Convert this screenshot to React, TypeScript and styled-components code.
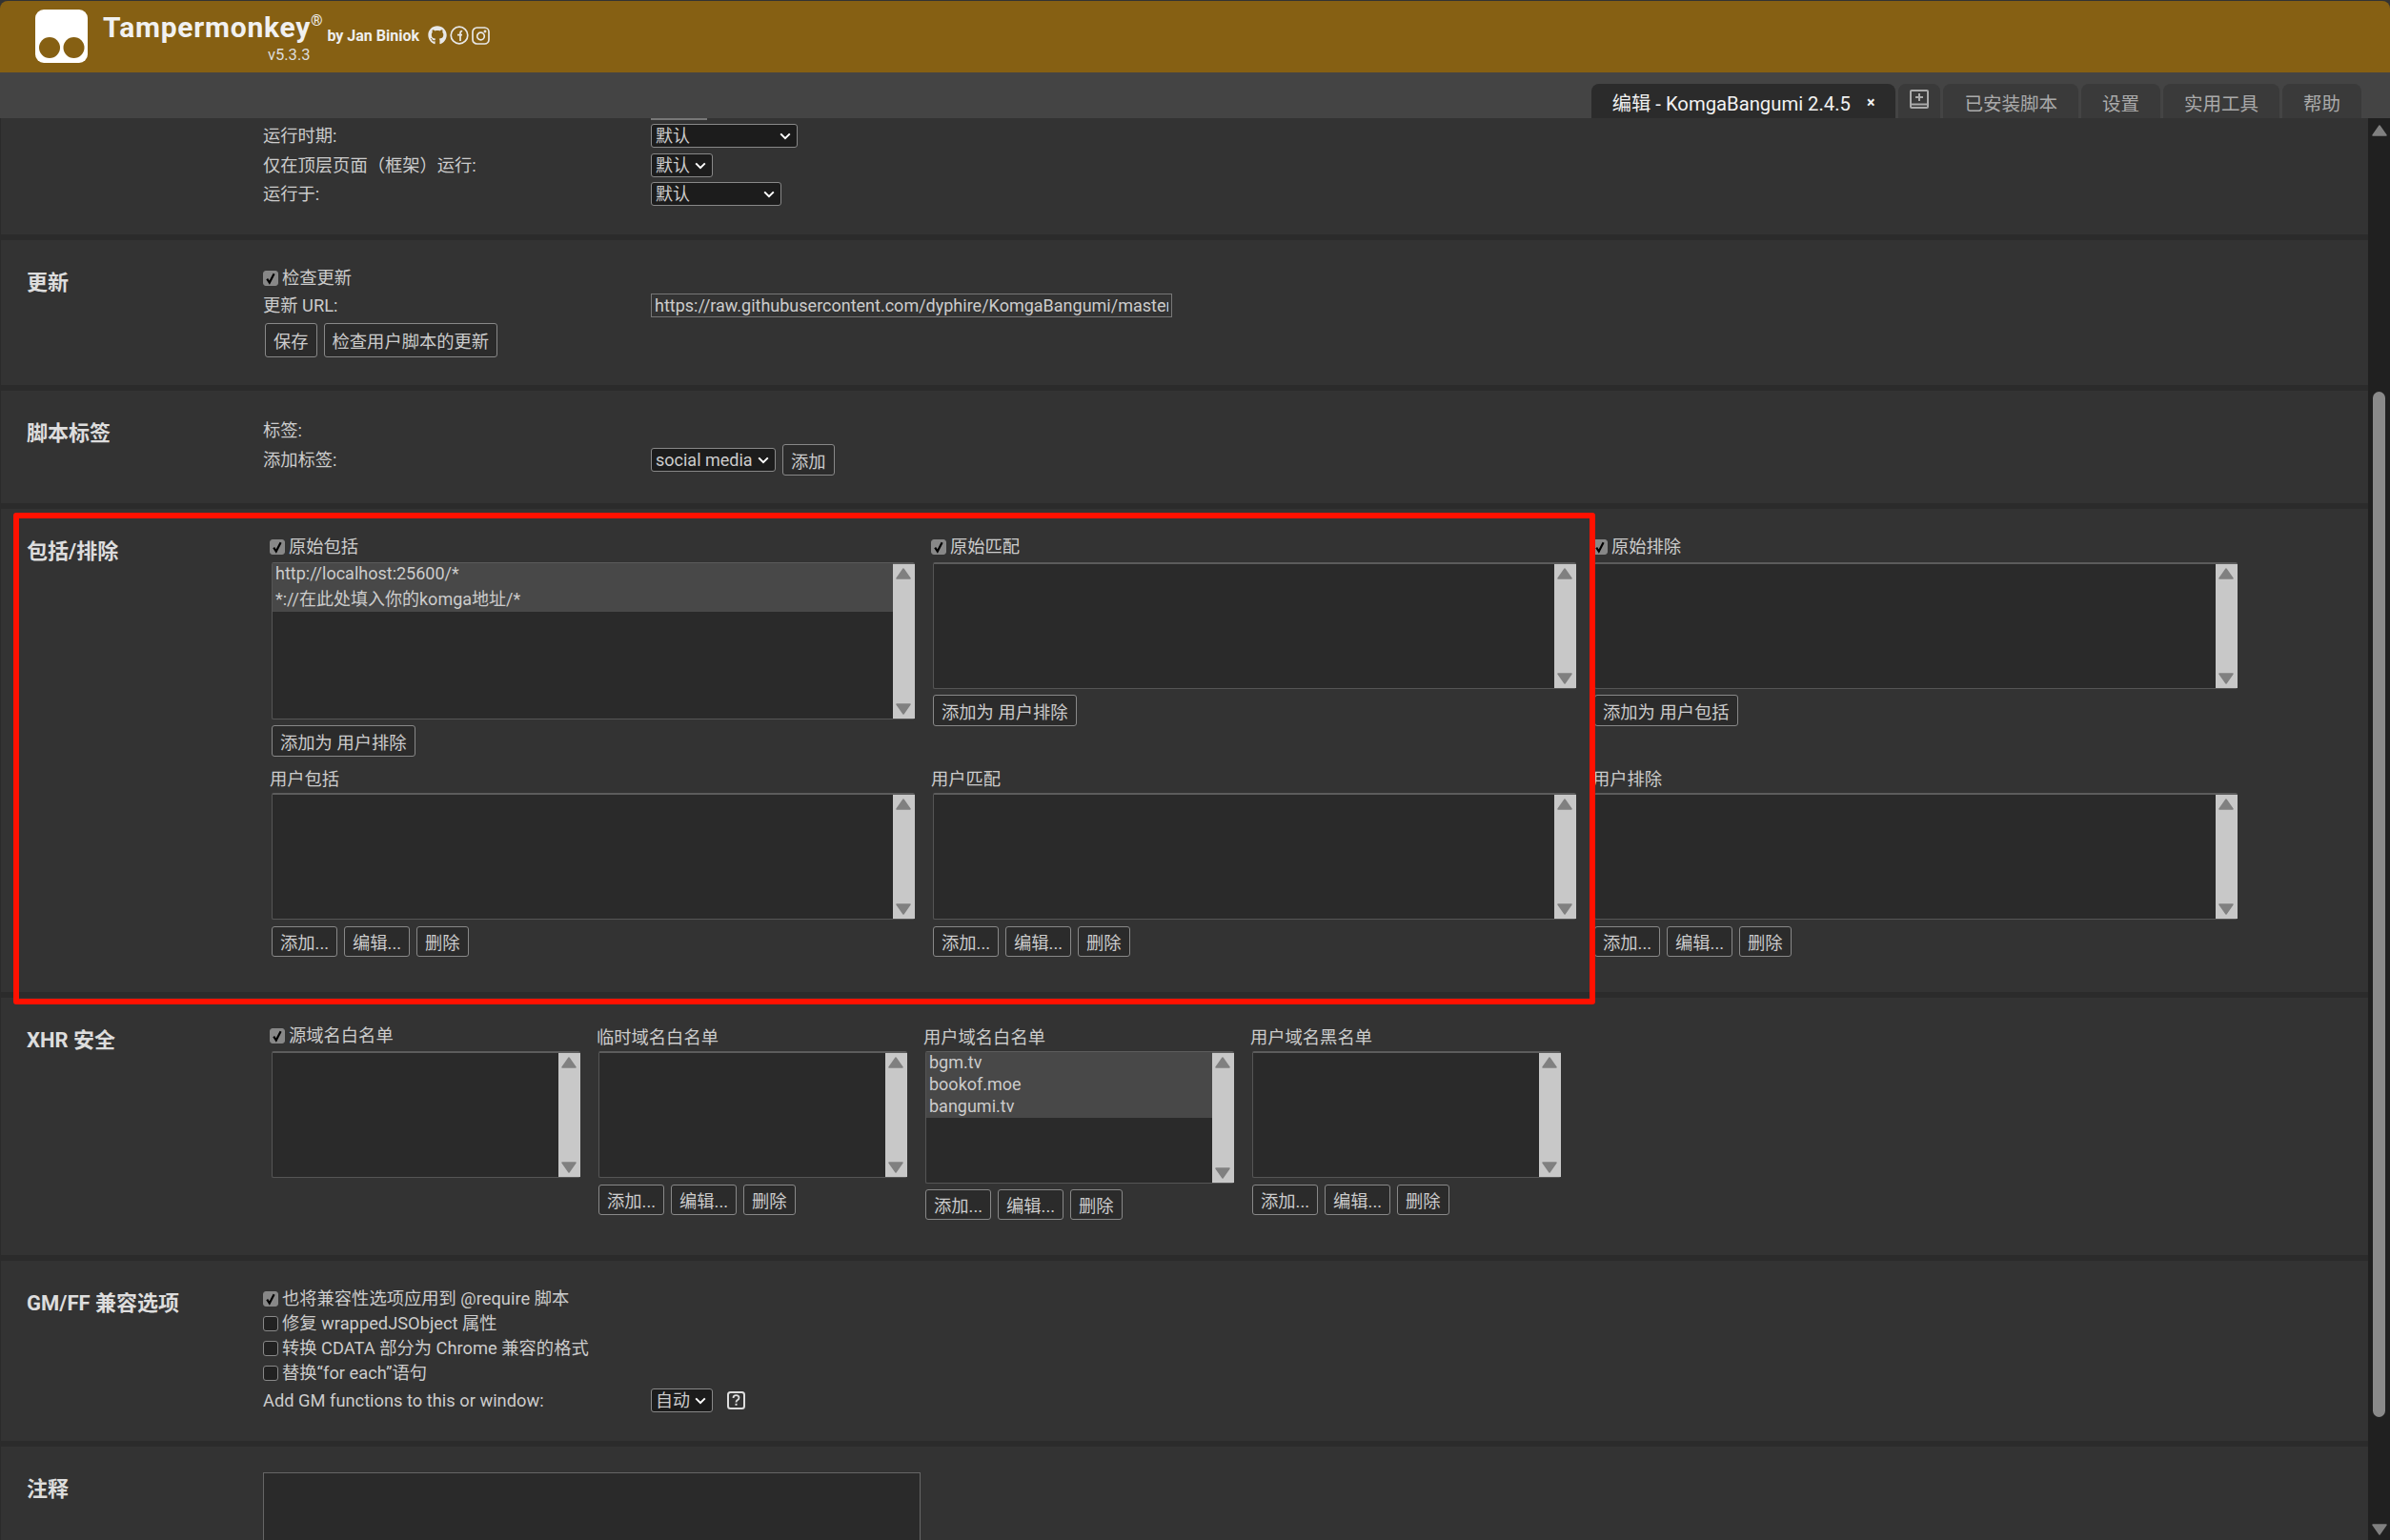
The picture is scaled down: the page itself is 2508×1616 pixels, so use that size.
import { FC, ReactNode } from 'react'
import styled, { createGlobalStyle } from 'styled-components'
import { FaGithub } from 'react-icons/fa'

const chevron = `url("data:image/svg+xml,%3Csvg xmlns='http://www.w3.org/2000/svg' width='12' height='8' viewBox='0 0 12 8'%3E%3Cpath d='M1.2 1.4 L6 6.2 L10.8 1.4' fill='none' stroke='white' stroke-width='2'/%3E%3C/svg%3E")`
const tick = `url("data:image/svg+xml,%3Csvg xmlns='http://www.w3.org/2000/svg' width='16' height='16' viewBox='0 0 16 16'%3E%3Cpath d='M4.2 8.6 L6.8 12.6 L11.6 3.2' fill='none' stroke='black' stroke-width='2.2'/%3E%3C/svg%3E")`

const GlobalStyle = createGlobalStyle`
    html, body {
        margin: 0;
        height: 100%;
        overflow: hidden;
        background: #333;
        color-scheme: dark;
    }
    * {
        box-sizing: border-box;
    }
`

const Page = styled.div`
    position: relative;
    display: flex;
    flex-direction: column;
    height: 1616px;
    overflow: hidden;
    background: #333;
    color: #ccc;
    font-family: Roboto, "Noto Sans CJK SC", sans-serif;
    font-size: 18.3px;
`

const Header = styled.header`
    display: flex;
    align-items: flex-start;
    gap: 16px;
    height: 75px;
    margin-top: 1px;
    padding: 9px 0 0 37px;
    background: #866013;
    border-radius: 8px 8px 0 0;
`

const Brand = styled.div`
    display: flex;
    flex-direction: column;
`

const BrandLine = styled.div`
    display: flex;
    align-items: flex-start;
    height: 40px;
`

const BrandName = styled.span`
    color: #f1f1f1;
    font-size: 30px;
    font-weight: 700;
    line-height: 38px;
    letter-spacing: 0.75px;
    sup {
        font-size: 16px;
        font-weight: 400;
        line-height: 0;
        vertical-align: 12px;
    }
`

const ByLine = styled.span`
    align-self: flex-end;
    margin: 0 0 2px 4px;
    color: #eee;
    font-size: 16px;
    font-weight: 700;
    line-height: 20px;
`

const Socials = styled.span`
    display: inline-flex;
    align-self: flex-end;
    align-items: center;
    gap: 3px;
    margin: 0 0 3px 9px;
    color: #e8e8e8;
`

const Version = styled.div`
    margin: -1px 0 0 173px;
    color: #ddd;
    font-size: 16.5px;
    line-height: 18px;
`

const TabBar = styled.nav`
    display: flex;
    align-items: flex-end;
    justify-content: flex-end;
    gap: 3px;
    height: 48px;
    padding-right: 30px;
    background: #444;
`

const Tab = styled.div<{ $active?: boolean }>`
    display: flex;
    align-items: center;
    height: 36px;
    padding: 2px 22px 0;
    border-radius: 8px 8px 0 0;
    background: ${p => (p.$active ? '#2b2b2b' : '#3a3a3a')};
    color: ${p => (p.$active ? '#f2f2f2' : '#aaa')};
    font-size: ${p => (p.$active ? 20.25 : 19.5)}px;
`

const IconTab = styled(Tab)`
    padding: 6px 12px 0;
    align-items: flex-start;
`

const CloseMark = styled.span`
    margin-left: 17px;
    font-size: 16px;
    font-weight: 700;
`

const Body = styled.div`
    display: flex;
    flex: 1;
    min-height: 0;
`

const Sections = styled.main`
    display: flex;
    flex: 1;
    flex-direction: column;
    gap: 6px;
    overflow: hidden;
    background: #2b2b2b;
`

const Section = styled.section<{ $h: number }>`
    display: flex;
    flex: none;
    height: ${p => p.$h}px;
    background: #333;
    border-left: 1px solid #2b2b2b;
`

const SectionTitle = styled.h2`
    flex: none;
    width: 275px;
    margin: 0;
    padding: 30px 0 0 27px;
    color: #ddd;
    font-size: 22px;
    font-weight: 700;
    line-height: 30px;
`

const Content = styled.div<{ $top: number }>`
    display: flex;
    flex-direction: column;
    align-items: flex-start;
    padding-top: ${p => p.$top}px;
`

const ScrolledEdge = styled.div`
    width: 59px;
    height: 2px;
    margin: 0 0 4px 407px;
    background: #777;
`

const FormRow = styled.div<{ $gap?: number }>`
    display: flex;
    align-items: center;
    min-height: 25px;
    margin-bottom: ${p => p.$gap ?? 5}px;
`

const FieldLabel = styled.label<{ $gap?: number }>`
    flex: none;
    width: 407px;
    margin-bottom: ${p => p.$gap ?? 0}px;
    line-height: 20px;
`

const Dropdown = styled.select<{ $w: number }>`
    appearance: none;
    width: ${p => p.$w}px;
    height: 25px;
    padding: 0 0 0 4px;
    background: #1c1c1c ${chevron} no-repeat right 6px center;
    border: 1.5px solid #888;
    border-radius: 3px;
    color: #ccc;
    font-family: inherit;
    font-size: 18px;
`

const UrlInput = styled.input`
    width: 547px;
    height: 25px;
    padding: 0 3px;
    background: #333;
    border: 1px solid #777;
    color: #ccc;
    font-family: inherit;
    font-size: 18px;
`

const CheckRow = styled.label<{ $gap?: number }>`
    display: flex;
    align-items: center;
    gap: 4px;
    height: 16px;
    line-height: 16px;
    white-space: nowrap;
    margin-bottom: ${p => p.$gap ?? 0}px;
`

const Check = styled.input.attrs({ type: 'checkbox', readOnly: true })`
    appearance: none;
    flex: none;
    width: 16px;
    height: 16px;
    margin: 0;
    background: #222;
    border: 1.5px solid #888;
    border-radius: 3px;
    &:checked {
        background: #888 ${tick} no-repeat center;
    }
`

const ButtonRow = styled.div<{ $top?: number; $left?: number }>`
    display: flex;
    gap: 7px;
    margin: ${p => p.$top ?? 6}px 0 0 ${p => p.$left ?? 0}px;
`

const Action = styled.button<{ $h?: number }>`
    height: ${p => p.$h ?? 32}px;
    padding: 0 8px;
    background: #2b2b2b;
    border: 1.5px solid #888;
    border-radius: 3px;
    color: #ccc;
    font-family: inherit;
    font-size: inherit;
    white-space: nowrap;
`

const ColumnGrid = styled.div<{ $cols: number; $pitch: number; $rows?: string }>`
    display: grid;
    grid-template-columns: repeat(${p => p.$cols}, ${p => p.$pitch}px);
    grid-template-rows: ${p => p.$rows ?? 'auto'};
    margin-left: 7px;
`

const Column = styled.div`
    display: flex;
    flex-direction: column;
    align-items: flex-start;
`

const ColumnHead = styled.div`
    height: 24px;
    line-height: 20px;
    white-space: nowrap;
`

const ListGroup = styled.div`
    margin-left: 2px;
`

const ListBox = styled.div<{ $w: number; $h: number }>`
    display: flex;
    width: ${p => p.$w}px;
    height: ${p => p.$h}px;
    background: #2a2a2a;
    border: 1px solid #555;
    border-top: 2px solid #5c5c5c;
    border-right: 0;
    border-radius: 2px;
`

const ListItems = styled.div`
    flex: 1;
    min-width: 0;
    margin-top: -1px;
    font-size: 18px;
`

const ListItem = styled.div`
    padding: 0 3px 2px;
    background: #484848;
    color: #ccc;
    white-space: nowrap;
`

const ListScroll = styled.div`
    display: flex;
    flex: none;
    flex-direction: column;
    align-items: center;
    justify-content: space-between;
    width: 23px;
    padding: 4px 2px 4px 0;
    background: #c8c8c8;
`

const Arrow = styled.svg<{ $down?: boolean }>`
    display: block;
    transform: ${p => (p.$down ? 'rotate(180deg)' : 'none')};
`

const Notes = styled.textarea`
    width: 690px;
    height: 140px;
    background: #2a2a2a;
    border: 1px solid #666;
    resize: none;
`

const HelpIcon = styled.svg`
    margin-left: 15px;
`

const PageScroll = styled.aside`
    display: flex;
    flex: none;
    flex-direction: column;
    align-items: center;
    width: 23px;
    padding: 7px 0 5px;
    background: #202020;
`

const PageThumb = styled.div`
    width: 13px;
    height: 1076px;
    margin: 268px 0 auto;
    background: #8a8a8a;
    border-radius: 7px;
`

const RedFrame = styled.div`
    position: absolute;
    top: 538px;
    left: 14px;
    width: 1660px;
    height: 516px;
    border: 6px solid #ff1100;
    border-radius: 3px;
    pointer-events: none;
`

const TriangleUp: FC<{ down?: boolean }> = ({ down }) => (
    <Arrow $down={down} width="16" height="12" viewBox="0 0 16 12">
        <path d="M8 1 L15 11 H1 Z" fill="#808080" stroke="#808080" strokeWidth="1.5" strokeLinejoin="round" />
    </Arrow>
)

const ScrollList: FC<{ w: number; h: number; items?: string[] }> = ({ w, h, items = [] }) => (
    <ListBox $w={w} $h={h}>
        <ListItems>
            {items.map(item => (
                <ListItem key={item}>{item}</ListItem>
            ))}
        </ListItems>
        <ListScroll>
            <TriangleUp />
            <TriangleUp down />
        </ListScroll>
    </ListBox>
)

const EditButtons: FC<{ top?: number }> = ({ top = 7 }) => (
    <ButtonRow $top={top}>
        <Action>添加...</Action>
        <Action>编辑...</Action>
        <Action>删除</Action>
    </ButtonRow>
)

const Checked: FC<{ children: ReactNode; on?: boolean; gap?: number }> = ({ children, on = true, gap }) => (
    <CheckRow $gap={gap}>
        <Check defaultChecked={on} />
        {children}
    </CheckRow>
)

const Logo = () => (
    <svg width="55" height="56" viewBox="0 0 55 56">
        <rect width="55" height="56" rx="9" fill="#fff" />
        <circle cx="15" cy="40" r="11" fill="#866013" />
        <circle cx="40.5" cy="40" r="11" fill="#866013" />
    </svg>
)

const FacebookIcon = () => (
    <svg width="20" height="20" viewBox="0 0 20 20" fill="none" stroke="currentColor" strokeWidth="1.7">
        <circle cx="10" cy="10" r="8.8" />
        <path d="M11 16 V8 Q11 5.5 13.2 5.5 M8 9.6 H13" />
    </svg>
)

const InstagramIcon = () => (
    <svg width="19" height="19" viewBox="0 0 19 19" fill="none" stroke="currentColor" strokeWidth="1.7">
        <rect x="1" y="1" width="17" height="17" rx="4.5" />
        <circle cx="9.5" cy="10" r="3.8" />
        <circle cx="14" cy="5" r="0.6" />
    </svg>
)

const AddIcon = () => (
    <svg width="20" height="20" viewBox="0 0 20 20" fill="none" stroke="#aaa">
        <rect x="1" y="1" width="18" height="18" rx="1" strokeWidth="2" />
        <path d="M2 15.5 H18" strokeWidth="2" />
        <path d="M10 4 V12 M6 8 H14" strokeWidth="2" />
    </svg>
)

const includeColumns = [
    { source: '原始包括', user: '用户包括', target: '添加为 用户排除', h: 165, items: ['http://localhost:25600/*', '*://在此处填入你的komga地址/*'] },
    { source: '原始匹配', user: '用户匹配', target: '添加为 用户排除', h: 133, items: [] },
    { source: '原始排除', user: '用户排除', target: '添加为 用户包括', h: 133, items: [] },
]

const App: FC = () => (
    <Page>
        <GlobalStyle />
        <Header>
            <Logo />
            <Brand>
                <BrandLine>
                    <BrandName>
                        Tampermonkey<sup>®</sup>
                    </BrandName>
                    <ByLine>by Jan Biniok</ByLine>
                    <Socials>
                        <FaGithub size={20} />
                        <FacebookIcon />
                        <InstagramIcon />
                    </Socials>
                </BrandLine>
                <Version>v5.3.3</Version>
            </Brand>
        </Header>
        <TabBar>
            <Tab $active>
                编辑 - KomgaBangumi 2.4.5<CloseMark>×</CloseMark>
            </Tab>
            <IconTab>
                <AddIcon />
            </IconTab>
            <Tab>已安装脚本</Tab>
            <Tab>设置</Tab>
            <Tab>实用工具</Tab>
            <Tab>帮助</Tab>
        </TabBar>
        <Body>
            <Sections>
                <Section $h={122}>
                    <SectionTitle />
                    <Content $top={0}>
                        <ScrolledEdge />
                        <FormRow $gap={6}>
                            <FieldLabel>运行时期:</FieldLabel>
                            <Dropdown $w={154}><option>默认</option></Dropdown>
                        </FormRow>
                        <FormRow>
                            <FieldLabel>仅在顶层页面（框架）运行:</FieldLabel>
                            <Dropdown $w={65}><option>默认</option></Dropdown>
                        </FormRow>
                        <FormRow>
                            <FieldLabel>运行于:</FieldLabel>
                            <Dropdown $w={137}><option>默认</option></Dropdown>
                        </FormRow>
                    </Content>
                </Section>
                <Section $h={152}>
                    <SectionTitle>更新</SectionTitle>
                    <Content $top={32}>
                        <Checked gap={8}>检查更新</Checked>
                        <FormRow $gap={0}>
                            <FieldLabel>更新 URL:</FieldLabel>
                            <UrlInput readOnly value="https://raw.githubusercontent.com/dyphire/KomgaBangumi/master/KomgaBangumi.user.js" />
                        </FormRow>
                        <ButtonRow $left={2}>
                            <Action $h={36}>保存</Action>
                            <Action $h={36}>检查用户脚本的更新</Action>
                        </ButtonRow>
                    </Content>
                </Section>
                <Section $h={118}>
                    <SectionTitle>脚本标签</SectionTitle>
                    <Content $top={32}>
                        <FieldLabel $gap={4}>标签:</FieldLabel>
                        <FormRow $gap={0}>
                            <FieldLabel>添加标签:</FieldLabel>
                            <Dropdown $w={131}><option>social media</option></Dropdown>
                            <ButtonRow $top={0} $left={7}>
                                <Action $h={33}>添加</Action>
                            </ButtonRow>
                        </FormRow>
                    </Content>
                </Section>
                <Section $h={507}>
                    <SectionTitle>包括/排除</SectionTitle>
                    <Content $top={32}>
                        <ColumnGrid $cols={3} $pitch={694} $rows="242px auto">
                            {includeColumns.map(col => (
                                <Column key={col.source}>
                                    <ColumnHead>
                                        <Checked>{col.source}</Checked>
                                    </ColumnHead>
                                    <ListGroup>
                                        <ScrollList w={675} h={col.h} items={col.items} />
                                        <ButtonRow>
                                            <Action $h={33}>{col.target}</Action>
                                        </ButtonRow>
                                    </ListGroup>
                                </Column>
                            ))}
                            {includeColumns.map(col => (
                                <Column key={col.user}>
                                    <ColumnHead>{col.user}</ColumnHead>
                                    <ListGroup>
                                        <ScrollList w={675} h={133} />
                                        <EditButtons />
                                    </ListGroup>
                                </Column>
                            ))}
                        </ColumnGrid>
                    </Content>
                </Section>
                <Section $h={270}>
                    <SectionTitle>XHR 安全</SectionTitle>
                    <Content $top={32}>
                        <ColumnGrid $cols={4} $pitch={343}>
                            <Column>
                                <ColumnHead>
                                    <Checked>源域名白名单</Checked>
                                </ColumnHead>
                                <ListGroup>
                                    <ScrollList w={324} h={133} />
                                </ListGroup>
                            </Column>
                            <Column>
                                <ColumnHead>临时域名白名单</ColumnHead>
                                <ListGroup>
                                    <ScrollList w={324} h={133} />
                                    <EditButtons />
                                </ListGroup>
                            </Column>
                            <Column>
                                <ColumnHead>用户域名白名单</ColumnHead>
                                <ListGroup>
                                    <ScrollList w={324} h={139} items={['bgm.tv', 'bookof.moe', 'bangumi.tv']} />
                                    <EditButtons top={6} />
                                </ListGroup>
                            </Column>
                            <Column>
                                <ColumnHead>用户域名黑名单</ColumnHead>
                                <ListGroup>
                                    <ScrollList w={324} h={133} />
                                    <EditButtons />
                                </ListGroup>
                            </Column>
                        </ColumnGrid>
                    </Content>
                </Section>
                <Section $h={189}>
                    <SectionTitle>GM/FF 兼容选项</SectionTitle>
                    <Content $top={32}>
                        <Checked gap={10}>也将兼容性选项应用到 @require 脚本</Checked>
                        <Checked on={false} gap={10}>修复 wrappedJSObject 属性</Checked>
                        <Checked on={false} gap={10}>转换 CDATA 部分为 Chrome 兼容的格式</Checked>
                        <Checked on={false} gap={8}>替换“for each”语句</Checked>
                        <FormRow $gap={0}>
                            <FieldLabel>Add GM functions to this or window:</FieldLabel>
                            <Dropdown $w={65}><option>自动</option></Dropdown>
                            <HelpIcon width="19" height="19" viewBox="0 0 19 19">
                                <rect x="1" y="1" width="17" height="17" rx="2.5" fill="none" stroke="#ddd" strokeWidth="2" />
                                <path d="M6.5 7 Q6.5 4.2 9.5 4.2 Q12.5 4.2 12.5 6.8 Q12.5 8.4 10.6 9.4 Q9.5 10 9.5 11.4" fill="none" stroke="#ddd" strokeWidth="1.8" />
                                <rect x="8.5" y="12.8" width="2" height="2" fill="#ddd" />
                            </HelpIcon>
                        </FormRow>
                    </Content>
                </Section>
                <Section $h={120}>
                    <SectionTitle>注释</SectionTitle>
                    <Content $top={27}>
                        <Notes readOnly />
                    </Content>
                </Section>
            </Sections>
            <PageScroll>
                <TriangleUp />
                <PageThumb />
                <TriangleUp down />
            </PageScroll>
        </Body>
        <RedFrame />
    </Page>
)

export default App
